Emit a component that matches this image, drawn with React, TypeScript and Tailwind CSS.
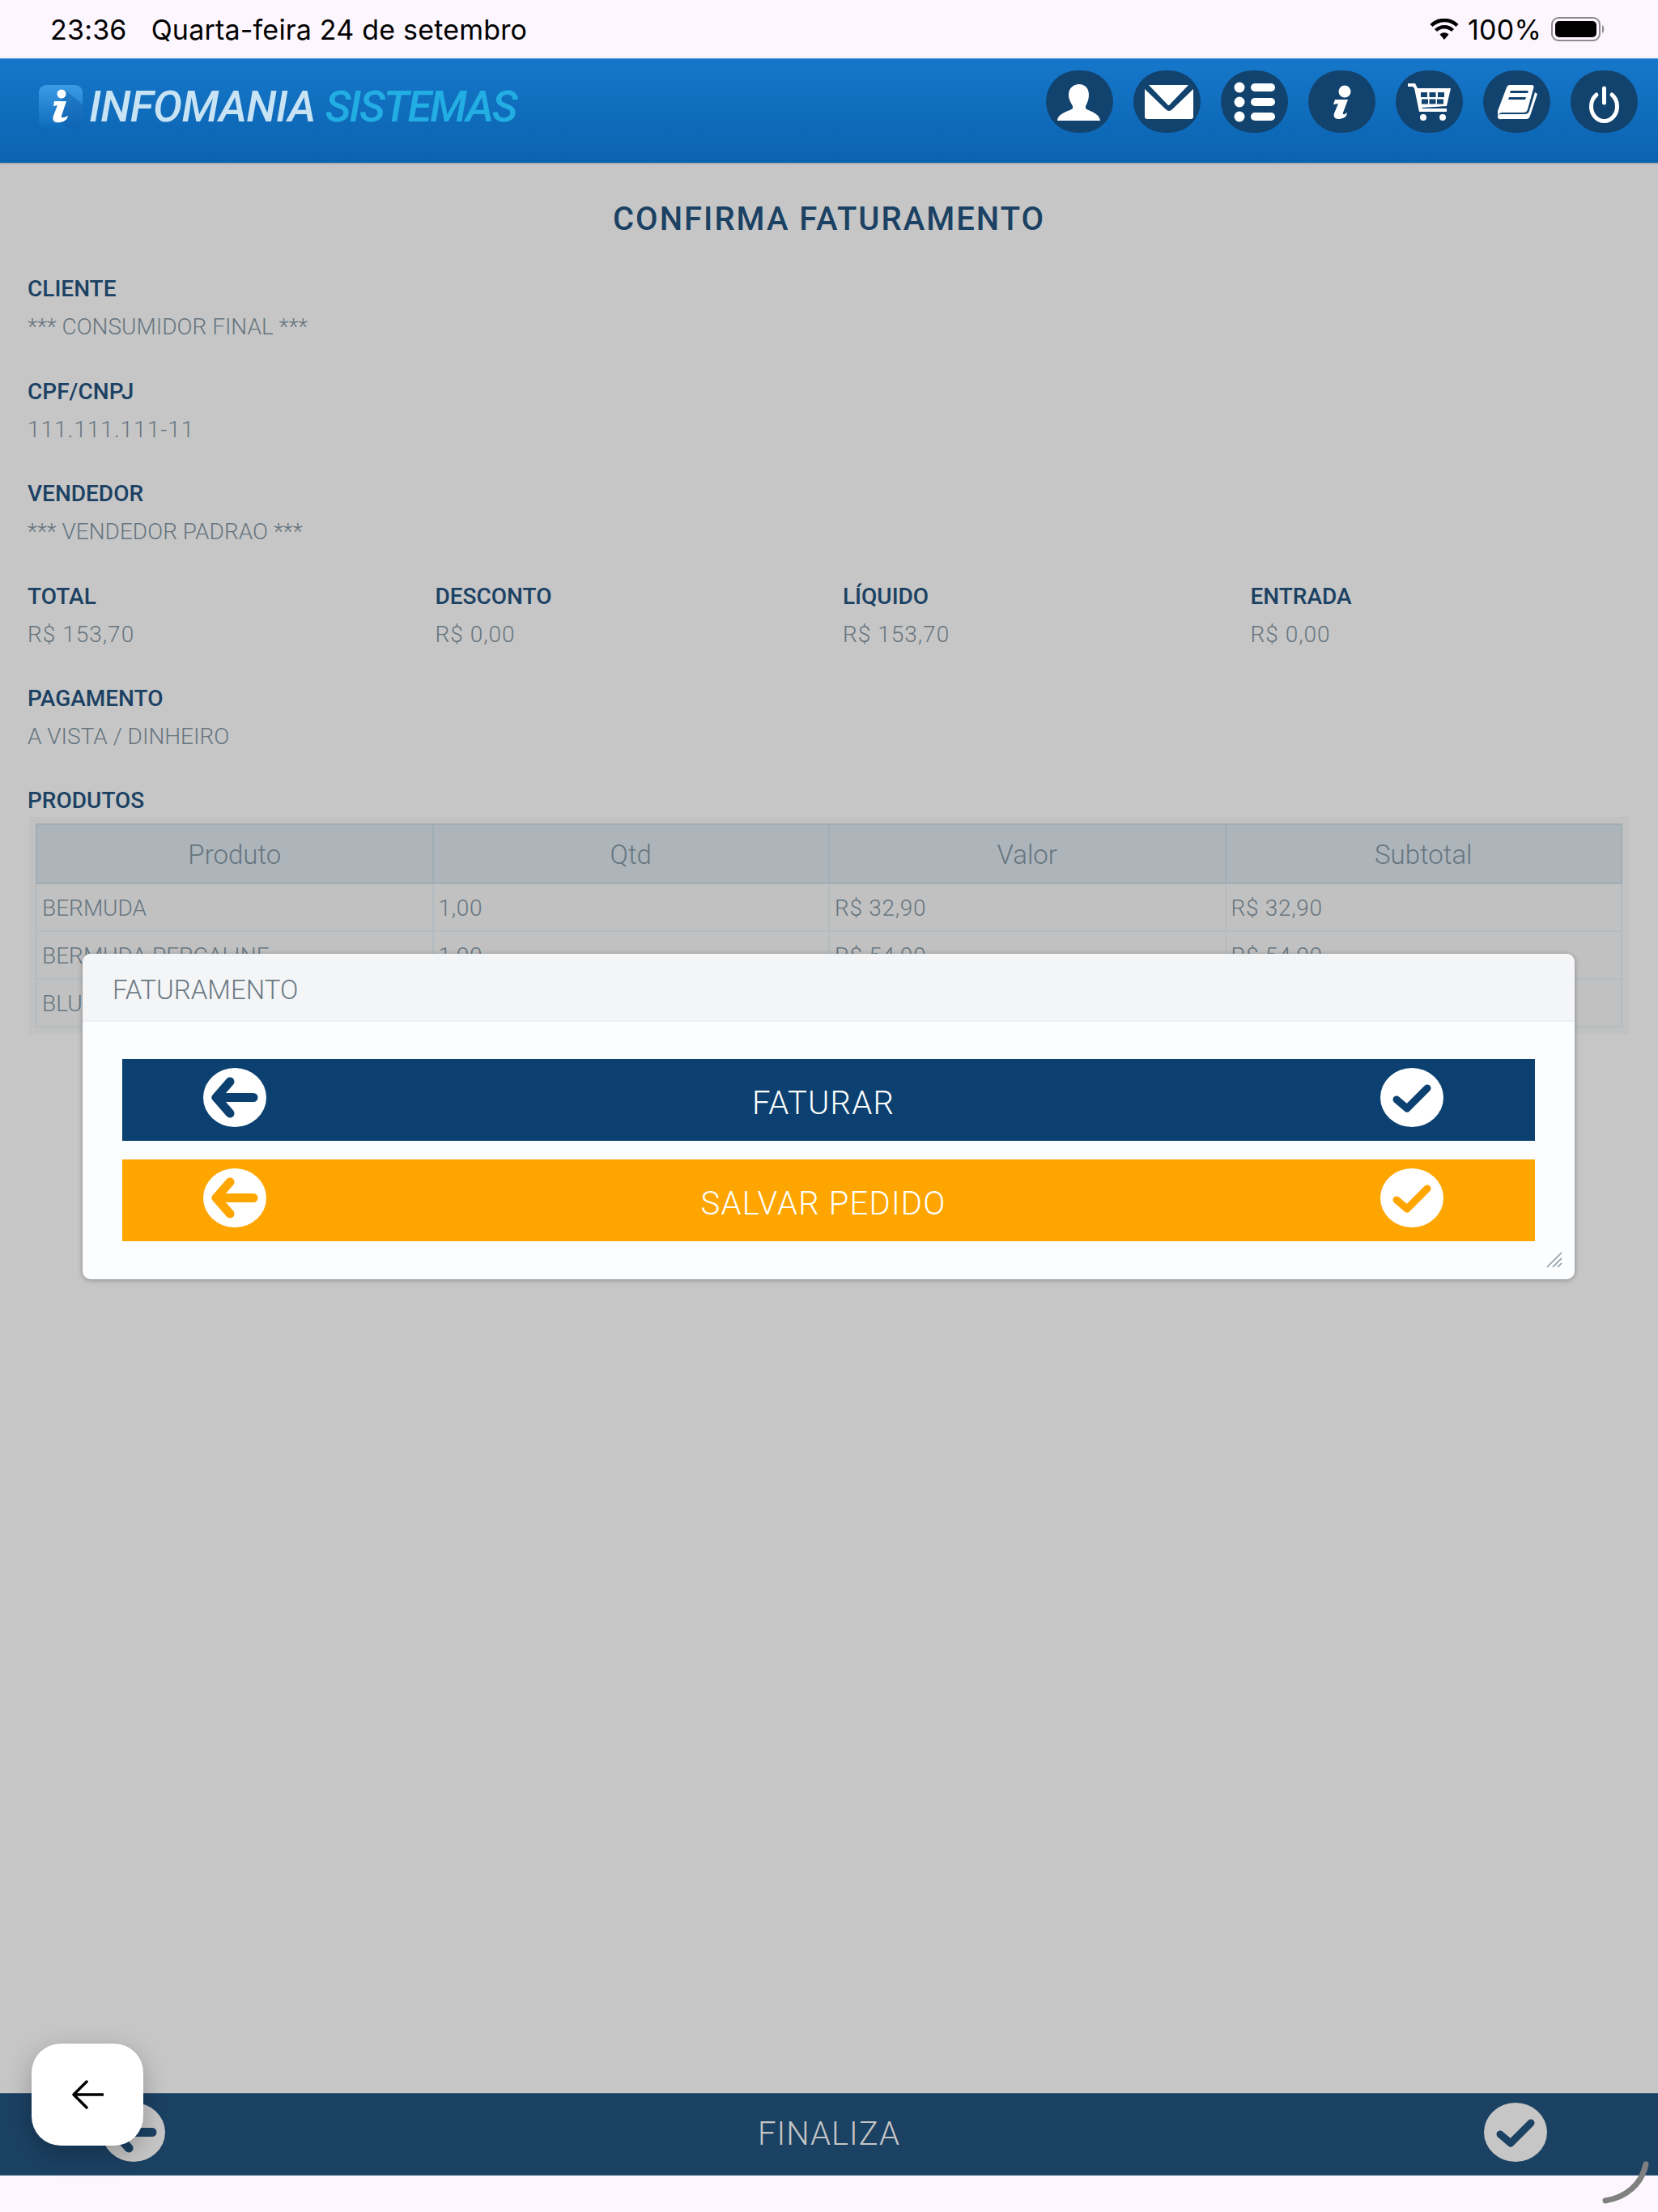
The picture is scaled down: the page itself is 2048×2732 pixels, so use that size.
import React from "react";

const F = "font-['Roboto','Liberation_Sans',sans-serif]";

function Oval({ children }: { children: React.ReactNode }) {
  return (
    <div className="w-[83px] h-[77px] rounded-full bg-[#11436e] flex items-center justify-center shrink-0">
      <svg viewBox="0 0 83 77" className="w-[83px] h-[77px]" fill="#ffffff">{children}</svg>
    </div>
  );
}

function ArrowCircle({ color, fill = "#ffffff", className = "" }: { color: string; fill?: string; className?: string }) {
  return (
    <svg viewBox="0 0 78 73" className={`w-[78px] h-[73px] shrink-0 ${className}`}>
      <ellipse cx="39" cy="36.5" rx="39" ry="36.5" fill={fill} />
      <path d="M33 17 L16 36.5 L33 56 M18 36.5 H62" fill="none" stroke={color} strokeWidth="11" strokeLinejoin="round" strokeLinecap="round" />
    </svg>
  );
}

function CheckCircle({ color, fill = "#ffffff", className = "" }: { color: string; fill?: string; className?: string }) {
  return (
    <svg viewBox="0 0 78 73" className={`w-[78px] h-[73px] shrink-0 ${className}`}>
      <ellipse cx="39" cy="36.5" rx="39" ry="36.5" fill={fill} />
      <path d="M20 39 L33 50 L58 25" fill="none" stroke={color} strokeWidth="9" strokeLinejoin="round" strokeLinecap="round" />
    </svg>
  );
}

function Field({ label, value, numeric = false }: { label: string; value: string; numeric?: boolean }) {
  return (
    <div>
      <div className="text-[28px] leading-[32px] font-medium text-[#1b4163]">{label}</div>
      <div className={`mt-[15px] text-[28px] leading-[32px] font-light text-[#66757f] ${numeric ? "tracking-[1px]" : ""}`}>{value}</div>
    </div>
  );
}

function ActionButton({ bg, iconColor, label }: { bg: string; iconColor: string; label: string }) {
  return (
    <div className={`h-[101px] flex items-start pl-[100px] pr-[113px] pt-[11px] ${bg}`}>
      <ArrowCircle color={iconColor} />
      <div className="flex-1 text-center text-white text-[40px] tracking-[1.2px] font-light leading-[46px] pt-[21px]">{label}</div>
      <CheckCircle color={iconColor} />
    </div>
  );
}

const rows = [
  ["BERMUDA", "1,00", "R$ 32,90", "R$ 32,90"],
  ["BERMUDA PERCALINE", "1,00", "R$ 54,00", "R$ 54,00"],
  ["BLUSA", "1,00", "R$ 66,80", "R$ 66,80"],
];

export default function App() {
  return (
    <div className={`relative w-[2048px] h-[2732px] flex flex-col overflow-hidden bg-[#c6c6c6] ${F}`}>
      {/* status bar */}
      <div className="h-[72px] bg-[#fdf6fe] flex items-center justify-between pl-[62px] pr-[64px] text-black text-[34px] tracking-[0.2px] font-['Inter',sans-serif] shrink-0">
        <div className="flex gap-[30px]">
          <span>23:36</span>
          <span>Quarta-feira 24 de setembro</span>
        </div>
        <div className="flex items-center gap-[11px]">
          <svg viewBox="0 0 36 26" className="w-[36px] h-[26px]">
            <path d="M18 26 L12.5 19.5 A8 8 0 0 1 23.5 19.5 Z" fill="#000" />
            <path d="M7.5 14.5 A15 15 0 0 1 28.5 14.5" fill="none" stroke="#000" strokeWidth="4.5" />
            <path d="M2 8.5 A23 23 0 0 1 34 8.5" fill="none" stroke="#000" strokeWidth="4.5" />
          </svg>
          <span>100%</span>
          <svg viewBox="0 0 68 30" className="w-[68px] h-[30px] ml-[1px]">
            <rect x="1" y="1" width="59" height="28" rx="8" fill="none" stroke="#8c8c8c" strokeWidth="2" />
            <rect x="5" y="5" width="51" height="20" rx="5" fill="#000" />
            <path d="M63 10 C66 11 66 19 63 20 Z" fill="#8c8c8c" />
          </svg>
        </div>
      </div>

      {/* header */}
      <div className="h-[129px] shrink-0 flex items-start justify-between pl-[48px] pr-[25px] pt-[14px] border-t border-[#3f8fd8] bg-gradient-to-b from-[#1677ca] to-[#0a63b0] shadow-[0_1px_2px_rgba(0,0,0,0.25)]">
        <div className="flex items-start pt-[18px]">
          <svg viewBox="0 0 54 53" className="w-[54px] h-[53px] shrink-0">
            <defs>
              <linearGradient id="lg" x1="0" y1="0" x2="0" y2="1">
                <stop offset="0" stopColor="#3c9be6" />
                <stop offset="1" stopColor="#0f6cbd" />
              </linearGradient>
            </defs>
            <rect width="54" height="53" rx="9" fill="url(#lg)" />
            <path d="M32 6 L54 24 V44 Q54 53 45 53 H36 L20 44 Z" fill="#0d5ea8" opacity="0.45" />
            <circle cx="28" cy="11" r="5.5" fill="#fff" />
            <path d="M19 20 H34 L28 38 C27 41 30 41 36 38 C35 45 27 47 21 46 C17 45 17 41 18 38 L23 25 L18 26 Z" fill="#fff" />
          </svg>
          <div className="ml-[8px] italic text-[54px] leading-[54px] tracking-[-0.6px] whitespace-nowrap font-medium">
            <span className="text-[#c8e4f4]">INFOMANIA</span>
            <span className="text-[#22aee3] ml-[12px] tracking-[-2.1px]">SISTEMAS</span>
          </div>
        </div>
        <div className="flex gap-[25px]">
          <Oval>
            <path d="M41 17 C48 17 53 22 53 30 C53 36 51 40 49 44 L49 47 C52 50 66 52 67 62 H14 C15 52 30 50 33 47 L33 44 C31 40 28 36 28 30 C28 22 34 17 41 17 Z" />
          </Oval>
          <Oval>
            <path d="M19 18 H68 L45 42 Q43.5 44 42 42 Z" />
            <path d="M14 23 L40 48 Q44 52 48 48 L74 23 V57 Q74 60 71 60 H17 Q14 60 14 57 Z" />
          </Oval>
          <Oval>
            <ellipse cx="23" cy="21" rx="6.5" ry="6.5" />
            <ellipse cx="23" cy="39" rx="6.5" ry="6.5" />
            <ellipse cx="23" cy="57" rx="6.5" ry="6.5" />
            <rect x="37" y="16" width="30" height="10" rx="5" />
            <rect x="37" y="34" width="30" height="10" rx="5" />
            <rect x="37" y="52" width="30" height="10" rx="5" />
          </Oval>
          <Oval>
            <circle cx="45" cy="26" r="7.5" />
            <path d="M33 36 H49 L43 52 C42 55 45 55 48 52 C48 58 42 60 37 60 C32 60 31 56 32 53 L37 41 L31 42 Z" />
          </Oval>
          <Oval>
            <path d="M15 16 H24 L27 22 H68 L63 44 L32 46 L33 47 H63 V51 H29 L23 22 L21 20 H15 Z" />
            <circle cx="34" cy="58" r="4" />
            <circle cx="58" cy="58" r="4" />
            <g fill="#11436e">
              <rect x="31" y="27" width="8" height="6" /><rect x="41.5" y="27" width="8" height="6" /><rect x="52" y="27" width="8" height="6" />
              <rect x="32" y="35.5" width="8" height="6" /><rect x="41.5" y="35.5" width="8" height="6" /><rect x="51" y="35.5" width="8" height="6" />
            </g>
          </Oval>
          <Oval>
            <path d="M33 18 H60 Q63 18 62.5 21 L55 48 Q54 52 50 52 H24 Q20 52 18 56 L18 50 L29 21 Q30 18 33 18 Z" />
            <path d="M18 57 Q18 54 22 54 H51 Q56 54 57 50 L64 27 L67 29 L58 56 Q57 60 53 60 H23 Q18 61 18 57 Z" />
            <path d="M34 25 H56 L55 28 H33 Z M32 33 H53 L52 36 H31 Z" fill="#11436e" />
          </Oval>
          <Oval>
            <path d="M32 30 A16 18 0 1 0 51 30" fill="none" stroke="#fff" strokeWidth="5" strokeLinecap="round" />
            <path d="M41.5 22 V40" fill="none" stroke="#fff" strokeWidth="5" strokeLinecap="round" />
          </Oval>
        </div>
      </div>

      {/* main */}
      <div className="flex-1 relative">
        <h1 className="pt-[47px] text-center text-[40px] leading-[46px] font-medium text-[#1b4163] tracking-[2px]">CONFIRMA FATURAMENTO</h1>
        <div className="pl-[34px] pt-[47px] flex flex-col gap-[47.5px]">
          <Field label="CLIENTE" value="*** CONSUMIDOR FINAL ***" />
          <Field label="CPF/CNPJ" value="111.111.111-11" numeric />
          <Field label="VENDEDOR" value="*** VENDEDOR PADRAO ***" />
          <div className="grid grid-cols-4">
            <Field label="TOTAL" value="R$ 153,70" numeric />
            <Field label="DESCONTO" value="R$ 0,00" numeric />
            <Field label="LÍQUIDO" value="R$ 153,70" numeric />
            <Field label="ENTRADA" value="R$ 0,00" numeric />
          </div>
          <Field label="PAGAMENTO" value="A VISTA / DINHEIRO" />
        </div>
        <div className="pl-[34px] mt-[47px] text-[28px] leading-[32px] font-medium text-[#1b4163]">PRODUTOS</div>
        <div className="mt-[4px] mx-[36px] p-[8px] bg-[#c1c1c1]">
          <table className="w-full table-fixed border-collapse text-[#66757f] font-light">
            <thead>
              <tr className="h-[73px] bg-[#adb5bb]">
                {["Produto", "Qtd", "Valor", "Subtotal"].map((h) => (
                  <th key={h} className="border-2 border-[#a0adb5] pt-[2px] text-[33px] font-light">{h}</th>
                ))}
              </tr>
            </thead>
            <tbody>
              {rows.map((r) => (
                <tr key={r[0]} className="h-[59px]">
                  {r.map((c, i) => (
                    <td key={i} className={`border-2 border-[#b4bcc1] px-[6px] pt-[3px] text-[28px] whitespace-nowrap overflow-hidden ${i > 0 ? "tracking-[0.7px]" : ""}`}>{c}</td>
                  ))}
                </tr>
              ))}
            </tbody>
          </table>
        </div>

        {/* modal */}
        <div className="absolute left-[102px] top-[977px] w-[1843px] h-[402px] rounded-[10px] bg-[#fcfdfe] shadow-[0_1px_6px_rgba(0,0,0,0.3)] overflow-hidden">
          <div className="h-[84px] bg-[#f4f5f7] border-b-2 border-[#edf0f3] flex items-center pl-[37px] pt-[8px] text-[33px] font-light text-[#6c7a84]">FATURAMENTO</div>
          <div className="pt-[46px] pl-[49px] pr-[49px] flex flex-col gap-[23px]">
            <ActionButton bg="bg-[#0b4070]" iconColor="#0b4070" label="FATURAR" />
            <ActionButton bg="bg-[#ffa500]" iconColor="#ffa500" label="SALVAR PEDIDO" />
          </div>
          <svg viewBox="0 0 20 20" className="absolute right-[15px] bottom-[14px] w-[20px] h-[20px]">
            <path d="M1 19 L19 1 M8 19 L19 8 M14 19 L19 14" stroke="#8d9aa3" strokeWidth="1.6" fill="none" />
          </svg>
        </div>
      </div>

      {/* bottom bar */}
      <div className="h-[102px] shrink-0 bg-[#1b4163] border-y border-[#3d5f7e] flex items-center justify-between pl-[126px] pr-[137px]">
        <ArrowCircle color="#1b4163" fill="#c6c6c6" className="mb-[5px]" />
        <div className="ml-[11px] text-[40px] tracking-[1px] font-light text-[#c6c6c6]">FINALIZA</div>
        <CheckCircle color="#1b4163" fill="#c6c6c6" className="mb-[5px]" />
      </div>
      <div className="h-[45px] shrink-0 bg-[#fdf6fe]" />

      {/* floating back button */}
      <div className="absolute left-[39px] top-[2524px] w-[138px] h-[126px] rounded-[36px] bg-white shadow-[0_10px_30px_rgba(0,0,0,0.25)] flex items-center justify-center">
        <svg viewBox="0 0 40 36" className="w-[40px] h-[36px]">
          <path d="M19 2 L3 18 L19 34 M3 18 H39" fill="none" stroke="#000" strokeWidth="3.5" strokeLinecap="round" strokeLinejoin="round" />
        </svg>
      </div>

      {/* corner indicator */}
      <svg viewBox="0 0 60 56" className="absolute left-[1978px] top-[2668px] w-[60px] h-[56px]">
        <path d="M55 5 C50 30 30 46 5 50" fill="none" stroke="#808080" strokeWidth="7" strokeLinecap="round" />
      </svg>
    </div>
  );
}
